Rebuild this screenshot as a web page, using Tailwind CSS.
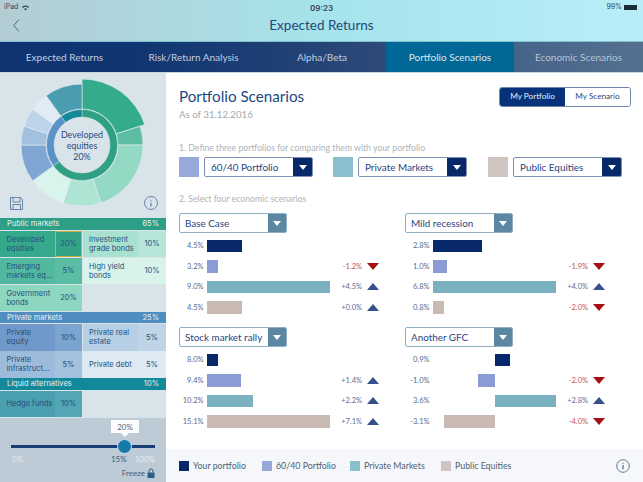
<!DOCTYPE html>
<html lang="en">
<head>
  <meta charset="UTF-8">
  <title>Expected Returns</title>
  <script src="https://cdn.jsdelivr.net/npm/@tailwindcss/browser@4"></script>
</head>
<body class="w-[643px] h-[482px] overflow-hidden bg-white font-['Lato',sans-serif] text-[#27457d]">
  <!-- header -->
  <header class="h-[42px] bg-gradient-to-r from-[#b3ccd4] via-[#a6e3ea] to-[#b9eef9] relative border-b border-[#7fc3d0]">
    <div class="flex justify-between items-center px-1 h-[15px] text-[7px] text-[#33475a]">
      <div class="flex items-center gap-1 font-['Inter',sans-serif]">iPad
        <svg width="7" height="6" viewBox="0 0 14 12"><path d="M0 4a10 10 0 0 1 14 0l-2 2a7 7 0 0 0-10 0zM4 8a4 4 0 0 1 6 0l-3 3z" fill="#33475a"/></svg>
      </div>
      <div class="absolute left-0 right-0 text-center text-[8px] font-semibold font-['Inter',sans-serif]">09:23</div>
      <div class="flex items-center gap-0.5 pr-0.5 font-['Inter',sans-serif]">99%
        <span class="w-[13px] h-[5px] bg-[#1c2b3a] block"></span>
      </div>
    </div>
    <svg class="absolute left-[13px] top-[19px]" width="7" height="13" viewBox="0 0 7 13"><path d="M6 .5L.8 6.5 6 12.5" fill="none" stroke="#3f6f88" stroke-width="1"/></svg>
    <div class="text-center text-[13.5px] leading-[20px] text-[#1d4a78]">Expected Returns</div>
  </header>

  <!-- tabs -->
  <nav class="h-[31px] flex text-[10px] text-[#c3cede] border-b border-[#c5d5de]">
    <div class="w-[129px] flex items-center justify-center bg-[#0e3472]">Expected Returns</div>
    <div class="w-[129px] flex items-center justify-center bg-gradient-to-r from-[#0f3572] to-[#1c3e74]">Risk/Return Analysis</div>
    <div class="w-[128px] flex items-center justify-center bg-gradient-to-r from-[#1c3e74] to-[#2e4a78]">Alpha/Beta</div>
    <div class="w-[128px] flex items-center justify-center bg-[#006797] text-[#dbe7ef]">Portfolio Scenarios</div>
    <div class="w-[129px] flex items-center justify-center bg-gradient-to-r from-[#46638a] to-[#55708f] text-[#b7c5d3]">Economic Scenarios</div>
  </nav>

  <div class="flex h-[409px]">
    <!-- sidebar -->
    <aside class="w-[166px] shrink-0 bg-[#d9e3ea] flex flex-col font-['Inter',sans-serif]">
      <svg id="donut" class="block shrink-0" width="166" height="144" viewBox="0 73 166 144">
        <g id="segs"></g>
        <text text-anchor="middle" font-size="8.9" fill="#2c4a80" font-family="Lato"><tspan x="82" y="138">Developed</tspan><tspan x="82" y="149">equities</tspan><tspan x="82" y="159.500">20%</tspan></text>
        <g fill="none" stroke="#5c7ea0" stroke-width="0.9">
          <path d="M10.500 197.500h10l2 2v10h-12zM13 197.500v4.500h7v-4.500M13 209.500v-5h7.500v5"/>
          <circle cx="151" cy="203" r="6.500"/>
          <path d="M151 200.500v1M151 203v3.500" stroke-width="1.200"/>
        </g>
      </svg>

      <div id="alloc" class="text-[7.5px] leading-[9px] text-[#24507a]"></div>

      <!-- slider -->
      <div class="flex-1 bg-[#bccbd5] relative">
        <div class="absolute left-[111px] top-[2.500px] w-[28px] h-[13px] bg-white flex items-center justify-center text-[8px] text-[#4b5e70] font-['Lato',sans-serif]">20%</div>
        <div class="absolute left-[121px] top-[15.500px] w-0 h-0 border-x-[4px] border-x-transparent border-t-[4px] border-t-white"></div>
        <div class="mx-[11px] mt-[27px] h-[3px] bg-[#1b3d76]"></div>
        <div class="absolute left-[117px] top-[21px] w-[15px] h-[15px] rounded-full bg-[#157aa9] border border-[#d3dee6]"></div>
        <div class="flex justify-between pl-[12px] pr-[11px] mt-[6px] text-[8px] leading-[10px] text-[#e6ecf0] font-['Lato',sans-serif]">
          <span>0%</span>
          <span class="ml-auto text-[#3f5f7e] mr-[8px]">15%</span>
          <span>100%</span>
        </div>
        <div class="flex justify-end items-center gap-[2px] pr-[11px] mt-[4px] text-[8px] leading-[10px] text-[#3f5f7e] font-['Lato',sans-serif]">Freeze
          <svg width="8" height="10" viewBox="0 0 8 10"><path d="M2 4.500V3a2 2 0 0 1 4 0v1.500" fill="none" stroke="#2b5a85" stroke-width="1"/><rect x="0.500" y="4.500" width="7" height="5.500" fill="#2b5a85"/></svg>
        </div>
      </div>
    </aside>

    <!-- main -->
    <main class="flex-1 flex flex-col min-w-0">
      <div class="flex-1 pl-[13px] pr-[12px]">
        <div class="flex justify-between h-[67.500px]">
          <div class="pt-[12px]">
            <h1 class="text-[15.200px] leading-[22px] text-[#1b4a80]">Portfolio Scenarios</h1>
            <p class="text-[9.700px] leading-[13px] mt-[1px] text-[#a4a9ae]">As of 31.12.2016</p>
          </div>
          <div class="flex h-[20px] mt-[13.500px] text-[8.200px] rounded-[3px] border border-[#6b85ab] overflow-hidden">
            <div class="w-[65px] bg-[#07327a] text-[#e6edf5] flex items-center justify-center">My Portfolio</div>
            <div class="w-[65px] bg-white text-[#2b4a80] flex items-center justify-center">My Scenario</div>
          </div>
        </div>

        <p class="text-[8.700px] leading-[13px] text-[#aeb3b8]">1. Define three portfolios for comparing them with your portfolio</p>
        <div class="flex mt-[3.500px] h-[20px]">
          <div class="w-[20px] h-[20px] bg-[#98a8d8]"></div>
          <div class="w-[109px] ml-[5px] flex rounded-[2px] border border-[#7e90b3] overflow-hidden">
            <span class="flex-1 pl-[6px] text-[9.900px] leading-[18px]">60/40 Portfolio</span>
            <span class="w-[19px] bg-[#07296a] flex items-center justify-center"><svg width="8" height="5" viewBox="0 0 8 5"><path d="M0 0h8L4 5z" fill="#fff"/></svg></span>
          </div>
          <div class="w-[20px] h-[20px] ml-[20px] bg-[#8cbfcd]"></div>
          <div class="w-[109px] ml-[5px] flex rounded-[2px] border border-[#7e90b3] overflow-hidden">
            <span class="flex-1 pl-[6px] text-[9.900px] leading-[18px]">Private Markets</span>
            <span class="w-[19px] bg-[#07296a] flex items-center justify-center"><svg width="8" height="5" viewBox="0 0 8 5"><path d="M0 0h8L4 5z" fill="#fff"/></svg></span>
          </div>
          <div class="w-[20px] h-[20px] ml-[21px] bg-[#cfc4bf]"></div>
          <div class="w-[109px] ml-[5px] flex rounded-[2px] border border-[#7e90b3] overflow-hidden">
            <span class="flex-1 pl-[6px] text-[9.900px] leading-[18px]">Public Equities</span>
            <span class="w-[19px] bg-[#07296a] flex items-center justify-center"><svg width="8" height="5" viewBox="0 0 8 5"><path d="M0 0h8L4 5z" fill="#fff"/></svg></span>
          </div>
        </div>

        <p class="text-[8.700px] leading-[13px] mt-[14.500px] text-[#aeb3b8]">2. Select four economic scenarios</p>
        <div id="scenarios" class="grid grid-cols-[226px_226px] gap-y-[13.500px] mt-[8.500px]"></div>
      </div>

      <footer class="h-[33px] bg-[#f5f7fa] flex items-center pl-[13px] pr-[13px] text-[8.800px] text-[#4f6172]">
        <span class="w-[10px] h-[10px] bg-[#07296a]"></span><span class="ml-[4px] w-[69px]">Your portfolio</span>
        <span class="w-[10px] h-[10px] bg-[#98a8d8]"></span><span class="ml-[4px] w-[74px]">60/40 Portfolio</span>
        <span class="w-[10px] h-[10px] bg-[#8cbfcd]"></span><span class="ml-[4px] w-[77px]">Private Markets</span>
        <span class="w-[10px] h-[10px] bg-[#cfc4bf]"></span><span class="ml-[4px]">Public Equities</span>
        <svg class="ml-auto" width="14" height="14" viewBox="0 0 14 14"><circle cx="7" cy="7" r="6.300" fill="none" stroke="#4f6f8c" stroke-width="0.900"/><path d="M7 3.800v1M7 6v4.300" stroke="#4f6f8c" stroke-width="1.200"/></svg>
      </footer>
    </main>
  </div>

  <script>
    // donut
    const CX = 82, CY = 145;
    function arc(a0, a1, r0, r1) {
      const pt = (a, r) => {
        const t = (a - 90) * Math.PI / 180;
        return (CX + r * Math.cos(t)).toFixed(2) + ' ' + (CY + r * Math.sin(t)).toFixed(2);
      };
      const big = a1 - a0 > 180 ? 1 : 0;
      return `M${pt(a0, r1)}A${r1} ${r1} 0 ${big} 1 ${pt(a1, r1)}L${pt(a1, r0)}A${r0} ${r0} 0 ${big} 0 ${pt(a0, r0)}Z`;
    }
    const outer = [
      [20, '#35ab8e', 66], [5, '#5cbfa4', 61], [20, '#93d9c4', 61], [10, '#aee4d4', 61], [10, '#d9f4ec', 61],
      [10, '#7fa6d2', 61], [5, '#a3c1df', 61], [5, '#bdd3e7', 61], [5, '#e0ebf5', 61], [10, '#4a9cb0', 61]
    ];
    const inner = [[65, '#2fa084'], [25, '#5c93c6'], [10, '#128a9c']];
    let svgHtml = '', pos = 0;
    outer.forEach(([v, c, r]) => {
      svgHtml += `<path d="${arc(pos * 3.6, (pos + v) * 3.6, 36, r)}" fill="${c}" stroke="#e4ecf1" stroke-width="0.6"/>`;
      pos += v;
    });
    pos = 0;
    inner.forEach(([v, c]) => {
      svgHtml += `<path d="${arc(pos * 3.6, (pos + v) * 3.6, 28, 35.5)}" fill="${c}" stroke="#e4ecf1" stroke-width="0.4"/>`;
      pos += v;
    });
    document.getElementById('segs').innerHTML = svgHtml;

    // allocation table
    const head = (name, pct, bg) => `<div class="h-[11.500px] mb-[1px] px-[7px] flex justify-between items-center text-[#e8f3f3] ${bg}"><span>${name}</span><span>${pct}</span></div>`;
    const cell = (name, pct, nameBg, pctBg, extra = '') => `
      <div class="flex items-center pl-[6.500px] whitespace-nowrap overflow-hidden ${nameBg}"><span>${name}</span></div>
      <div class="flex items-center justify-center ${pctBg} ${extra}">${pct}</div>`;
    const row = cells => `<div class="grid grid-cols-[54.500px_27px_55px_28px] gap-x-[0.500px] h-[26.500px] mb-[0.500px]">${cells}</div>`;
    const blank = '<div class="col-span-2"></div>';
    document.getElementById('alloc').innerHTML =
      '<div class="mt-[1px]"></div>' +
      head('Public markets', '65%', 'bg-[#2e9f87]') +
      row(cell('Developed<br>equities', '20%', 'bg-[#36a98d]', 'bg-[#33a488]', 'border border-[#c9ab3f]') + cell('Investment<br>grade bonds', '10%', 'bg-[#a9e1d0]', 'bg-[#b6e5d9]')) +
      row(cell('Emerging<br>markets eq...', '5%', 'bg-[#52b9a0]', 'bg-[#5cbda5]') + cell('High yield<br>bonds', '10%', 'bg-[#d8f3ea]', 'bg-[#d8f3ea]')) +
      row(cell('Government<br>bonds', '20%', 'bg-[#8dd6c0]', 'bg-[#8dd6c0]') + blank) +
      head('Private markets', '25%', 'bg-[#4f8dc0]') +
      row(cell('Private<br>equity', '10%', 'bg-[#7099cb]', 'bg-[#7aa5d0]') + cell('Private real<br>estate', '5%', 'bg-[#b6cfe4]', 'bg-[#bfd5e7]')) +
      row(cell('Private<br>infrastruct...', '5%', 'bg-[#9dbcdc]', 'bg-[#a4c1de]') + cell('Private debt', '5%', 'bg-[#dde9f3]', 'bg-[#dde9f3]')) +
      head('Liquid alternatives', '10%', 'bg-[#12889b]') +
      row(cell('Hedge funds', '10%', 'bg-[#4a9fb0]', 'bg-[#52a6b6]') + blank);

    // scenarios: [label, bar start inside chart, bar width, delta]
    const barColors = ['bg-[#07296a]', 'bg-[#8b9bd3]', 'bg-[#7bb2c2]', 'bg-[#c9bab4]'];
    const scenarios = [
      ['Base Case', [['4.5%', 0, 35, ''], ['3.2%', 0, 11, '-1.2%'], ['9.0%', 0, 123, '+4.5%'], ['4.5%', 0, 35, '+0.0%']]],
      ['Mild recession', [['2.8%', 0, 49, ''], ['1.0%', 0, 14, '-1.9%'], ['6.8%', 0, 123, '+4.0%'], ['0.8%', 0, 11, '-2.0%']]],
      ['Stock market rally', [['8.0%', 0, 11, ''], ['9.4%', 0, 34, '+1.4%'], ['10.2%', 0, 46, '+2.2%'], ['15.1%', 0, 123, '+7.1%']]],
      ['Another GFC', [['0.9%', 62, 15, ''], ['-1.0%', 45, 17, '-2.0%'], ['3.6%', 62, 61, '+2.8%'], ['-3.1%', 11, 51, '-4.0%']]]
    ];
    const up = '<svg width="12" height="7" viewBox="0 0 12 7"><path d="M6 0l6 7H0z" fill="#35508a"/></svg>';
    const down = '<svg width="12" height="7" viewBox="0 0 12 7"><path d="M0 0h12L6 7z" fill="#a50f14"/></svg>';
    document.getElementById('scenarios').innerHTML = scenarios.map(([name, rows]) => `
      <div>
        <div class="w-[108px] h-[20px] flex rounded-[2px] border border-[#8fb0c4] overflow-hidden">
          <span class="flex-1 pl-[5px] text-[9.900px] leading-[18px] whitespace-nowrap">${name}</span>
          <span class="w-[18px] bg-[#5b87a3] flex items-center justify-center"><svg width="8" height="5" viewBox="0 0 8 5"><path d="M0 0h8L4 5z" fill="#fff"/></svg></span>
        </div>
        <div class="mt-[6.500px] flex flex-col gap-[8px]">
          ${rows.map(([val, start, width, delta], i) => `
            <div class="flex items-center h-[12.500px] text-[7.500px]">
              <span class="w-[24.500px] text-right text-[#56698f]">${val}</span>
              <div class="w-[123px] h-full ml-[3.500px] flex">
                <div class="h-full ${barColors[i]}" style="margin-left:${start}px;width:${width}px"></div>
              </div>
              <span class="w-[32px] text-right ${delta[0] === '-' ? 'text-[#c0565a]' : 'text-[#5a6f98]'}">${delta}</span>
              <span class="ml-[5px] flex">${delta ? (delta[0] === '-' ? down : up) : ''}</span>
            </div>`).join('')}
        </div>
      </div>`).join('');
  </script>
</body>
</html>
